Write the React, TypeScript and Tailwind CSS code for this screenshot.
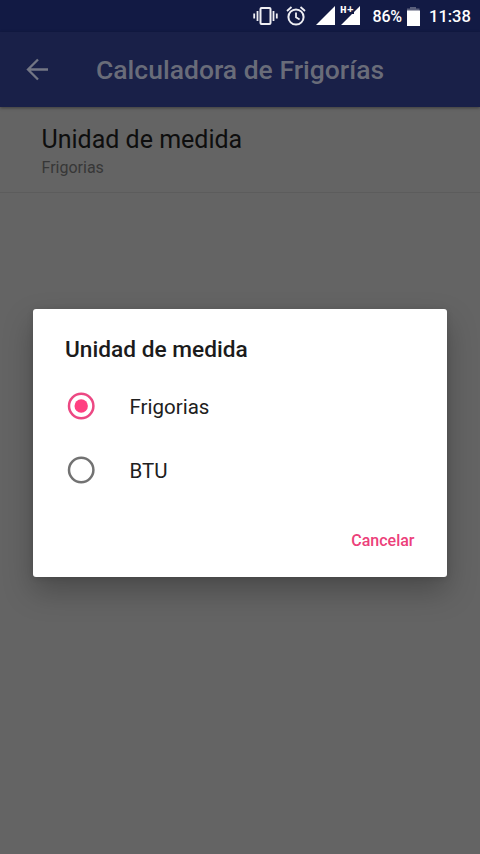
function StatusBar() {
  return (
    <div className="flex h-8 shrink-0 items-center bg-[#121a44] pl-[253px] text-white">
      <svg className="h-8 w-[25px] shrink-0" viewBox="0 0 25 32" fill="none" stroke="#eeeef3" strokeWidth="2">
        <rect x="7.500" y="8" width="10" height="16" rx="1" />
        <path d="M4.500 11v10M1.200 13.500v5M20.500 11v10M23.800 13.500v5" strokeWidth="1.800" />
      </svg>
      <svg className="ml-2 h-8 w-5 shrink-0" viewBox="0 0 20 32" fill="none" stroke="#eeeef3" strokeWidth="2">
        <circle cx="10" cy="17" r="7.600" />
        <path d="M10 12.500v4.800l3.600 2.200M1 11l4.500-4M19 11l-4.500-4" strokeWidth="1.800" />
      </svg>
      <svg className="ml-[10px] h-8 w-5 shrink-0" viewBox="0 0 20 32" fill="#fff">
        <path d="M0 25L19 6v19z" />
      </svg>
      <div className="relative ml-1 h-8 w-[21px] shrink-0">
        <svg className="h-8 w-[21px]" viewBox="0 0 21 32" fill="#fff">
          <path d="M1 25l11-11h2v-2L20 6v19z" />
        </svg>
        <span className="absolute left-0 top-[4px] font-['Liberation_Mono',monospace] text-[11px] font-bold leading-[12px] tracking-[0.500px]">H+</span>
      </div>
      <span className="ml-[11.500px] w-[29.500px] whitespace-nowrap pt-px text-[16px] font-medium leading-8 tracking-[-0.200px]">86%</span>
      <svg className="ml-1 h-8 w-[14px] shrink-0" viewBox="0 0 14 32">
        <path d="M1 8.500h3V7h6v1.500h3.500V11H1z" fill="#5a5f7b" />
        <path d="M1 10.500h13V26H1z" fill="#fff" />
      </svg>
      <span className="ml-[9px] whitespace-nowrap pt-px text-[16.500px] font-medium leading-8">11:38</span>
    </div>
  );
}

function RadioOption({ label, checked }: { label: string; checked: boolean }) {
  return (
    <div role="radio" aria-checked={checked} className="flex h-16 items-center pl-[34px]">
      <svg width="28" height="30" viewBox="0 0 28 30" fill="none">
        <circle cx="14.200" cy="14" r="12.200" stroke={checked ? "#ec4883" : "#727272"} strokeWidth="2.500" />
        {checked && <circle cx="14.200" cy="14" r="6.700" fill="#ff4081" />}
      </svg>
      <span className="ml-[34.500px] text-[20.500px] leading-8 text-[#202020]">{label}</span>
    </div>
  );
}

export default function App() {
  return (
    <div className="relative flex h-[854px] w-[480px] flex-col overflow-hidden bg-[#646464] font-['Roboto',sans-serif]">
      <StatusBar />
      <header className="flex h-[75px] shrink-0 items-center bg-[#192048] pl-[26px] shadow-[0_1px_3px_rgba(0,0,0,0.4)]">
        <svg width="23" height="24" viewBox="0 0 23 24" fill="none" stroke="#737684" strokeWidth="2.300">
          <path d="M22 11.500H2.500M12 1.500l-10 10 10 10" />
        </svg>
        <h1 className="ml-[47px] pt-px text-[26.500px] font-medium leading-9 text-[#696c79]">Calculadora de Frigorías</h1>
      </header>
      <section className="h-[86px] shrink-0 border-b border-[#5c5c5c] pl-[41.500px] pt-4">
        <div className="text-[25px] leading-[34px] text-[#0e0e0e]">Unidad de medida</div>
        <div className="text-[16px] leading-[21px] text-[#373737]">Frigorias</div>
      </section>
      <div
        role="dialog"
        className="absolute left-[33px] top-[309px] flex h-[268px] w-[414px] flex-col rounded-[3px] bg-white shadow-[0_14px_30px_rgba(0,0,0,0.26),0_1px_6px_rgba(0,0,0,0.12)]"
      >
        <h2 className="pl-8 pt-[25px] text-[22.700px] font-medium leading-8 text-[#1b1b1b]">Unidad de medida</h2>
        <div role="radiogroup" className="mt-[9px]">
          <RadioOption label="Frigorias" checked />
          <RadioOption label="BTU" checked={false} />
        </div>
        <div className="flex justify-end pr-[32.500px] pt-[26px]">
          <button className="text-[16px] font-medium leading-6 text-[#ec407a]">Cancelar</button>
        </div>
      </div>
    </div>
  );
}
